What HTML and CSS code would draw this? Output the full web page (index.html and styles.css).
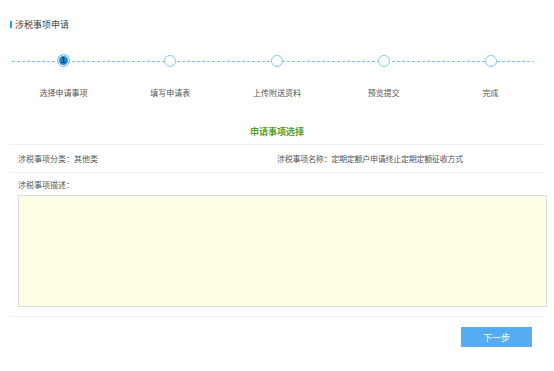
FILE: index.html
```html
<!DOCTYPE html>
<html lang="zh-CN">
<head>
    <meta charset="UTF-8">
    <meta name="viewport" content="width=device-width, initial-scale=1.0">
    <title>涉税事项申请</title>
    <link rel="stylesheet" href="styles.css">
</head>
<body>
    <div class="wrap">
        <h1 class="title">涉税事项申请</h1>

        <!-- 步骤条 -->
        <ol class="steps">
            <li class="step active"><span class="dot">1</span><p>选择申请事项</p></li>
            <li class="step"><span class="dot"></span><p>填写申请表</p></li>
            <li class="step"><span class="dot"></span><p>上传附送资料</p></li>
            <li class="step"><span class="dot"></span><p>预览提交</p></li>
            <li class="step"><span class="dot"></span><p>完成</p></li>
        </ol>

        <h2 class="sub-title">申请事项选择</h2>

        <div class="fields">
            <div class="row">
                <span>涉税事项分类：其他类</span>
                <span class="name">涉税事项名称：定期定额户申请终止定期定额征收方式</span>
            </div>
            <p class="desc-label">涉税事项描述：</p>
            <textarea class="desc"></textarea>
        </div>

        <div class="footer">
            <button class="btn-next">下一步</button>
        </div>
    </div>
</body>
</html>
```

FILE: styles.css
```css
body{
    margin: 0;
    font-family: "Noto Sans CJK SC", "Liberation Sans", sans-serif;
    color: #555;
    background: #fff;
}

.wrap{
    padding: 0 10px;
}

.title{
    margin: 21px 0 0;
    font-size: 9px;
    font-weight: normal;
    line-height: 7px;
    color: #444;
    border-left: 2px solid #2e9bf0;
    padding-left: 3px;
}

.steps{
    position: relative;
    display: flex;
    list-style: none;
    margin: 27px 0 0;
    padding: 0;
}
.steps::before{
    content: "";
    position: absolute;
    left: 2px;
    right: 11px;
    top: 6px;
    height: 1px;
    background: repeating-linear-gradient(90deg, #7cc0ea 0 3px, transparent 3px 5px);
}
.step{
    flex: 1;
    display: flex;
    flex-direction: column;
    align-items: center;
}
.dot{
    position: relative;
    width: 12px;
    height: 12px;
    box-sizing: border-box;
    border: 1.5px solid #86c8ee;
    border-radius: 50%;
    background: #fff;
}
.step.active .dot{
    width: 13px;
    height: 13px;
    margin-top: -1px;
    background: #1c8ad6;
    box-shadow: inset 0 0 0 1px #fff;
    font-size: 8px;
    font-weight: bold;
    line-height: 10px;
    text-align: center;
    color: #0c3a63;
}
.step p{
    margin: 21px 0 0;
    font-size: 8px;
    line-height: 10px;
    color: #555;
}

.sub-title{
    margin: 28px 0 6px;
    font-size: 9px;
    font-weight: bold;
    line-height: 12px;
    text-align: center;
    color: #52a12e;
}

.fields{
    border-top: 1px solid #f0f0f0;
}
.row{
    display: grid;
    grid-template-columns: 259px 1fr;
    height: 27px;
    align-items: center;
    padding-left: 8px;
    border-bottom: 1px solid #f0f0f0;
    font-size: 8px;
}
.row .name{
    letter-spacing: -0.25px;
}
.desc-label{
    margin: 7px 0 5px 8px;
    font-size: 8px;
    line-height: 10px;
}
.desc{
    display: block;
    margin-left: 8px;
    width: 529px;
    height: 112px;
    box-sizing: border-box;
    border: 1px solid #ddd;
    background: #ffffe6;
    resize: none;
}

.footer{
    margin-top: 9px;
    padding-top: 10px;
    border-top: 1px solid #f0f0f0;
    display: flex;
    justify-content: flex-end;
    padding-right: 12px;
}
.btn-next{
    width: 71px;
    height: 20px;
    border: none;
    background: #55acf1;
    color: #fff;
    font-family: inherit;
    font-size: 9px;
}
```
